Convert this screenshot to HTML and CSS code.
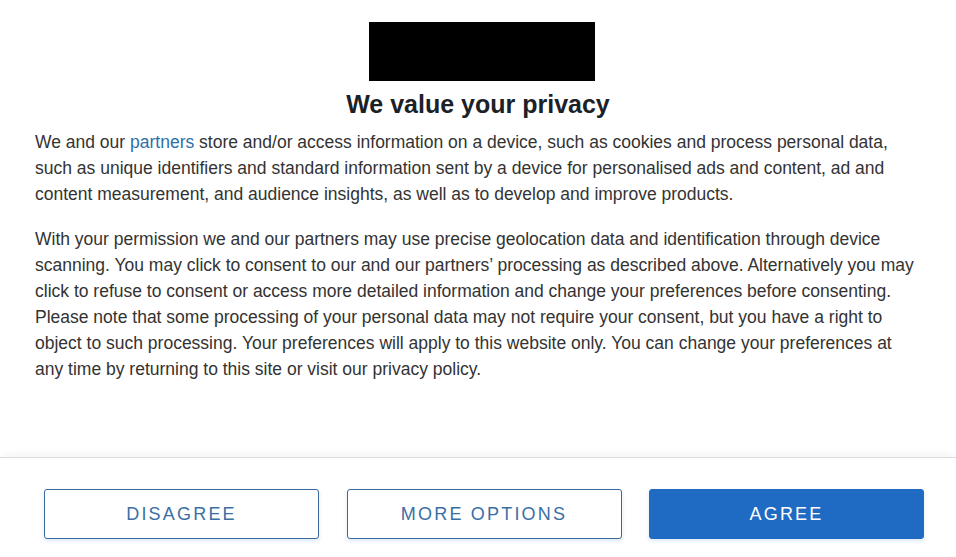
FILE: index.html
```html
<!DOCTYPE html>
<html lang="en">
<head>
<meta charset="utf-8">
<title>We value your privacy</title>
<link rel="stylesheet" href="styles.css">
</head>
<body>
<div class="page">
  <main class="content">
    <div class="logo-wrap"><div class="logo"></div></div>
    <h1 class="title">We value your privacy</h1>
    <p class="text">We and our <a class="link" href="#">partners</a> store and/or access information on a device, such as cookies and process personal data, such as unique identifiers and standard information sent by a device for personalised ads and content, ad and content measurement, and audience insights, as well as to develop and improve products.</p>
    <p class="text">With your permission we and our partners may use precise geolocation data and identification through device scanning. You may click to consent to our and our partners’ processing as described above. Alternatively you may click to refuse to consent or access more detailed information and change your preferences before consenting. Please note that some processing of your personal data may not require your consent, but you have a right to object to such processing. Your preferences will apply to this website only. You can change your preferences at any time by returning to this site or visit our privacy policy.</p>
  </main>
  <footer class="footer">
    <button class="btn btn-outline">DISAGREE</button>
    <button class="btn btn-outline">MORE OPTIONS</button>
    <button class="btn btn-primary">AGREE</button>
  </footer>
</div>
</body>
</html>
```
FILE: styles.css
```css
html, body {
  margin: 0;
  padding: 0;
  background: #fff;
}
.page {
  height: 557px;
  display: flex;
  flex-direction: column;
  font-family: "Liberation Sans", Arial, sans-serif;
}
.content {
  flex: 1;
  padding: 22px 35px 0 35px;
}
.logo-wrap {
  display: flex;
  justify-content: center;
}
.logo {
  width: 226px;
  height: 59px;
  margin-left: 8px;
  background: #000;
}
.title {
  margin: 8px 0 0 0;
  text-align: center;
  font-size: 25px;
  line-height: 30px;
  font-weight: bold;
  color: #1c2128;
}
.text {
  margin: 10px 0 19px 0;
  font-size: 17.5px;
  line-height: 26px;
  color: #333;
}
.text + .text {
  margin-top: 0;
}
.link {
  color: #2e6fa9;
  text-decoration: none;
}
.footer {
  height: 100px;
  box-sizing: border-box;
  border-top: 1px solid #dcdcdc;
  box-shadow: 0 -6px 8px -4px rgba(0,0,0,0.06);
  display: flex;
  align-items: flex-start;
  gap: 27.5px;
  padding: 31px 0 0 44px;
}
.btn {
  width: 275px;
  height: 50px;
  border-radius: 3px;
  font-family: "Liberation Sans", Arial, sans-serif;
  font-size: 18px;
  letter-spacing: 2.2px;
  cursor: pointer;
  box-shadow: 0 2px 4px rgba(30,100,190,0.15);
}
.btn-outline {
  background: #fff;
  border: 1px solid #3a6a9c;
  color: #3a6fa6;
}
.btn-primary {
  background: #1f6bc4;
  border: 1px solid #1f6bc4;
  color: #fff;
  font-weight: normal;
}
```
